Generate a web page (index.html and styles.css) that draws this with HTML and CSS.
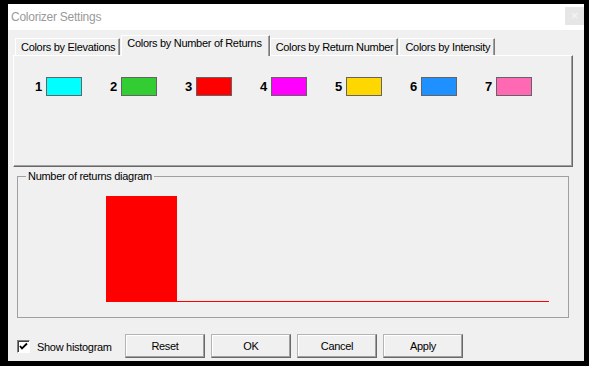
FILE: index.html
```html
<!DOCTYPE html>
<html>
<head>
<meta charset="utf-8">
<link rel="stylesheet" href="styles.css">
</head>
<body>
<div class="window">
  <div class="titlebar">
    <span class="title">Colorizer Settings</span>
    <span class="close">×</span>
  </div>
  <div class="tabs">
    <div class="tab first">Colors by Elevations</div>
    <div class="tab selected">Colors by Number of Returns</div>
    <div class="tab">Colors by Return Number</div>
    <div class="tab">Colors by Intensity</div>
  </div>
  <div class="panel">
    <div class="swatches">
      <div class="item"><span class="num">1</span><span class="swatch c1"></span></div>
      <div class="item"><span class="num">2</span><span class="swatch c2"></span></div>
      <div class="item"><span class="num">3</span><span class="swatch c3"></span></div>
      <div class="item"><span class="num">4</span><span class="swatch c4"></span></div>
      <div class="item"><span class="num">5</span><span class="swatch c5"></span></div>
      <div class="item"><span class="num">6</span><span class="swatch c6"></span></div>
      <div class="item"><span class="num">7</span><span class="swatch c7"></span></div>
    </div>
  </div>
  <fieldset class="group">
    <legend>Number of returns diagram</legend>
    <div class="chart">
      <div class="bar"></div>
      <div class="baseline"></div>
    </div>
  </fieldset>
  <div class="bottom">
    <label class="check">
      <span class="box"><svg width="11" height="11" viewBox="0 0 11 11"><path d="M2 5 L4 7.5 L9 2.5" fill="none" stroke="#000" stroke-width="1.8"/></svg></span>
      <span class="check-label">Show histogram</span>
    </label>
    <div class="buttons">
      <button class="btn">Reset</button>
      <button class="btn">OK</button>
      <button class="btn">Cancel</button>
      <button class="btn">Apply</button>
    </div>
  </div>
</div>
</body>
</html>
```
FILE: styles.css
```css
html, body {
  margin: 0;
  padding: 0;
  background: #000;
}
body {
  width: 589px;
  height: 366px;
  overflow: hidden;
  font-family: "Liberation Sans", Arial, sans-serif;
  font-size: 11px;
  letter-spacing: -0.3px;
  color: #000;
}
.window {
  margin: 4px 0 0 8px;
  width: 576px;
  height: 357px;
  background: #f0f0f0;
  display: flex;
  flex-direction: column;
}
.titlebar {
  height: 26px;
  background: #fff;
  display: flex;
  align-items: flex-start;
  justify-content: space-between;
  padding-left: 3px;
}
.title {
  font-size: 12px;
  letter-spacing: -0.25px;
  color: #9a9a9a;
  margin-top: 6px;
}
.close {
  margin-top: 3px;
  width: 19px;
  height: 18px;
  background: #e6e6e6;
  color: #f6f6f6;
  font-size: 13px;
  line-height: 18px;
  text-align: center;
  letter-spacing: 0;
}
.tabs {
  display: flex;
  align-items: flex-end;
  margin-top: 5px;
  padding-left: 7px;
  height: 20px;
}
.tab {
  height: 17px;
  box-sizing: border-box;
  padding: 2px 4px 0 5px;
  border-top: 1px solid #fff;
  border-left: 1px solid #fff;
  border-right: 1px solid #7a7a7a;
  box-shadow: inset -1px 0 #a0a0a0;
  white-space: nowrap;
  line-height: 13px;
}
.tab.selected {
  margin: 0 -1px -1px 1px;
  padding-top: 1px;
  padding-left: 5px;
  padding-right: 7px;
  background: #f0f0f0;
  position: relative;
  z-index: 1;
  height: 21px;
}
.tab + .tab:not(.selected) {
  margin-left: 1px;
}
.panel {
  margin-left: 5px;
  width: 560px;
  height: 112px;
  box-sizing: border-box;
  border-top: 1px solid #fff;
  border-left: 1px solid #fff;
  border-right: 1px solid #696969;
  border-bottom: 1px solid #696969;
  box-shadow: inset -1px -1px #a0a0a0;
}
.swatches {
  display: flex;
  padding: 21px 0 0 21px;
}
.item {
  width: 75px;
  display: flex;
  align-items: center;
  gap: 4px;
}
.num {
  font-weight: bold;
  font-size: 13px;
  letter-spacing: 0;
  line-height: 19px;
}
.swatch {
  width: 36px;
  height: 19px;
  box-sizing: border-box;
  border: 1px solid #646464;
}
.c1 { background: #00ffff; }
.c2 { background: #32cd32; }
.c3 { background: #ff0000; }
.c4 { background: #ff00ff; }
.c5 { background: #ffd700; }
.c6 { background: #1e90ff; }
.c7 { background: #ff69b4; }
.group {
  margin: 3px 0 0 9px;
  padding: 0;
  width: 552px;
  box-sizing: border-box;
  border: 1px solid #a0a0a0;
  min-width: 0;
}
.group legend {
  margin-left: 8px;
  padding: 0 2px;
  line-height: 13px;
  color: #000;
}
.chart {
  display: flex;
  align-items: flex-end;
  padding: 13px 19px 15px 88px;
}
.bar {
  width: 71px;
  height: 106px;
  background: #ff0000;
}
.baseline {
  flex: 1;
  height: 1px;
  background: #ff0000;
}
.bottom {
  display: flex;
  align-items: center;
  margin-top: 16px;
  padding-left: 9px;
}
.check {
  flex: 0 0 108px;
  display: flex;
  align-items: center;
  gap: 7px;
}
.box {
  width: 13px;
  height: 13px;
  box-sizing: border-box;
  background: #fff;
  border-top: 1px solid #808080;
  border-left: 1px solid #808080;
  border-right: 1px solid #fff;
  border-bottom: 1px solid #fff;
  box-shadow: inset 1px 1px #404040;
  display: flex;
  align-items: center;
  justify-content: center;
}
.box svg {
  display: block;
}
.check-label {
  color: #000;
  padding-top: 2px;
}
.buttons {
  display: flex;
  gap: 6px;
}
.btn {
  width: 80px;
  height: 24px;
  box-sizing: border-box;
  background: #f0f0f0;
  font-family: "Liberation Sans", Arial, sans-serif;
  font-size: 11px;
  letter-spacing: -0.3px;
  color: #000;
  padding: 0;
  border-top: 1px solid #b4b4b4;
  border-left: 1px solid #b4b4b4;
  border-right: 1px solid #696969;
  border-bottom: 1px solid #696969;
  box-shadow: inset -1px -1px #a0a0a0, inset 1px 1px #fff;
}
```
